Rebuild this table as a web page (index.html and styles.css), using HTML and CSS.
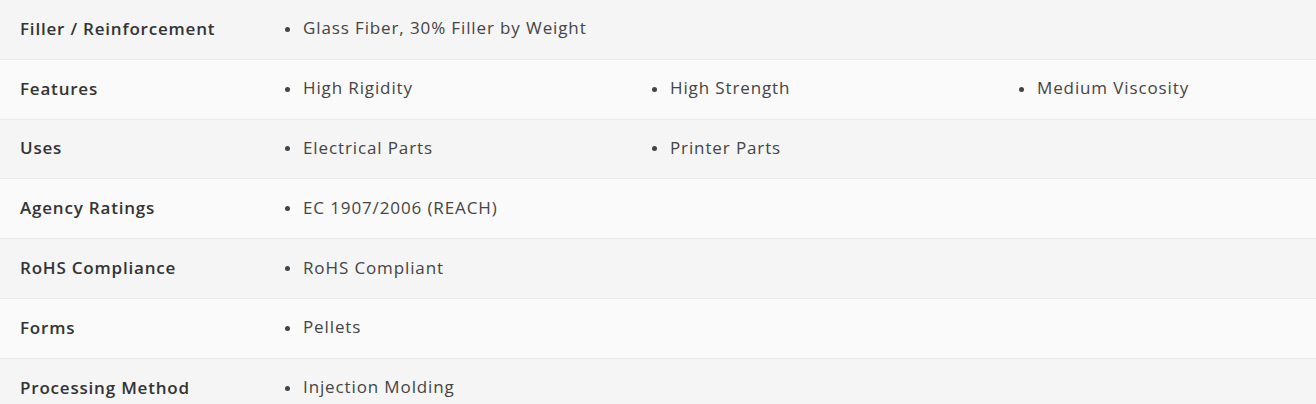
FILE: index.html
```html
<!DOCTYPE html>
<html>
<head>
<meta charset="utf-8">
<link rel="stylesheet" href="styles.css">
</head>
<body>
<div class="specs">
  <div class="row odd">
    <div class="label">Filler / Reinforcement</div>
    <ul class="values"><li>Glass Fiber, 30% Filler by Weight</li></ul>
  </div>
  <div class="row even">
    <div class="label">Features</div>
    <ul class="values"><li>High Rigidity</li><li>High Strength</li><li>Medium Viscosity</li></ul>
  </div>
  <div class="row odd">
    <div class="label">Uses</div>
    <ul class="values"><li>Electrical Parts</li><li>Printer Parts</li></ul>
  </div>
  <div class="row even">
    <div class="label">Agency Ratings</div>
    <ul class="values"><li>EC 1907/2006 (REACH)</li></ul>
  </div>
  <div class="row odd">
    <div class="label">RoHS Compliance</div>
    <ul class="values"><li>RoHS Compliant</li></ul>
  </div>
  <div class="row even">
    <div class="label">Forms</div>
    <ul class="values"><li>Pellets</li></ul>
  </div>
  <div class="row odd">
    <div class="label">Processing Method</div>
    <ul class="values"><li>Injection Molding</li></ul>
  </div>
</div>
</body>
</html>
```
FILE: styles.css
```css
html, body {
  margin: 0;
  padding: 0;
  background: #fafafa;
}
body {
  font-family: "Open Sans", "Noto Sans", sans-serif;
  overflow: hidden;
}
.row {
  display: grid;
  grid-template-columns: 283px minmax(0, 1fr);
  align-items: center;
  box-sizing: border-box;
  height: 59.8px;
  border-bottom: 1px solid #ebebeb;
}
.row.odd { background: #f5f5f5; }
.row.even { background: #fafafa; }
.label {
  padding-left: 20px;
  font-size: 17px;
  font-weight: 600;
  letter-spacing: 0.8px;
  color: #333333;
  margin-top: -2px;
}
.values {
  list-style: none;
  margin: -3px 0 0 0;
  padding: 0;
  display: grid;
  grid-template-columns: 367px 367px minmax(0, 1fr);
}
.values li {
  position: relative;
  padding-left: 20px;
  font-size: 17px;
  letter-spacing: 0.88px;
  color: #444444;
  white-space: nowrap;
}
.values li::before {
  content: "";
  position: absolute;
  left: 2px;
  top: 50%;
  width: 5px;
  height: 5px;
  margin-top: -1px;
  border-radius: 50%;
  background: #444444;
}
```
